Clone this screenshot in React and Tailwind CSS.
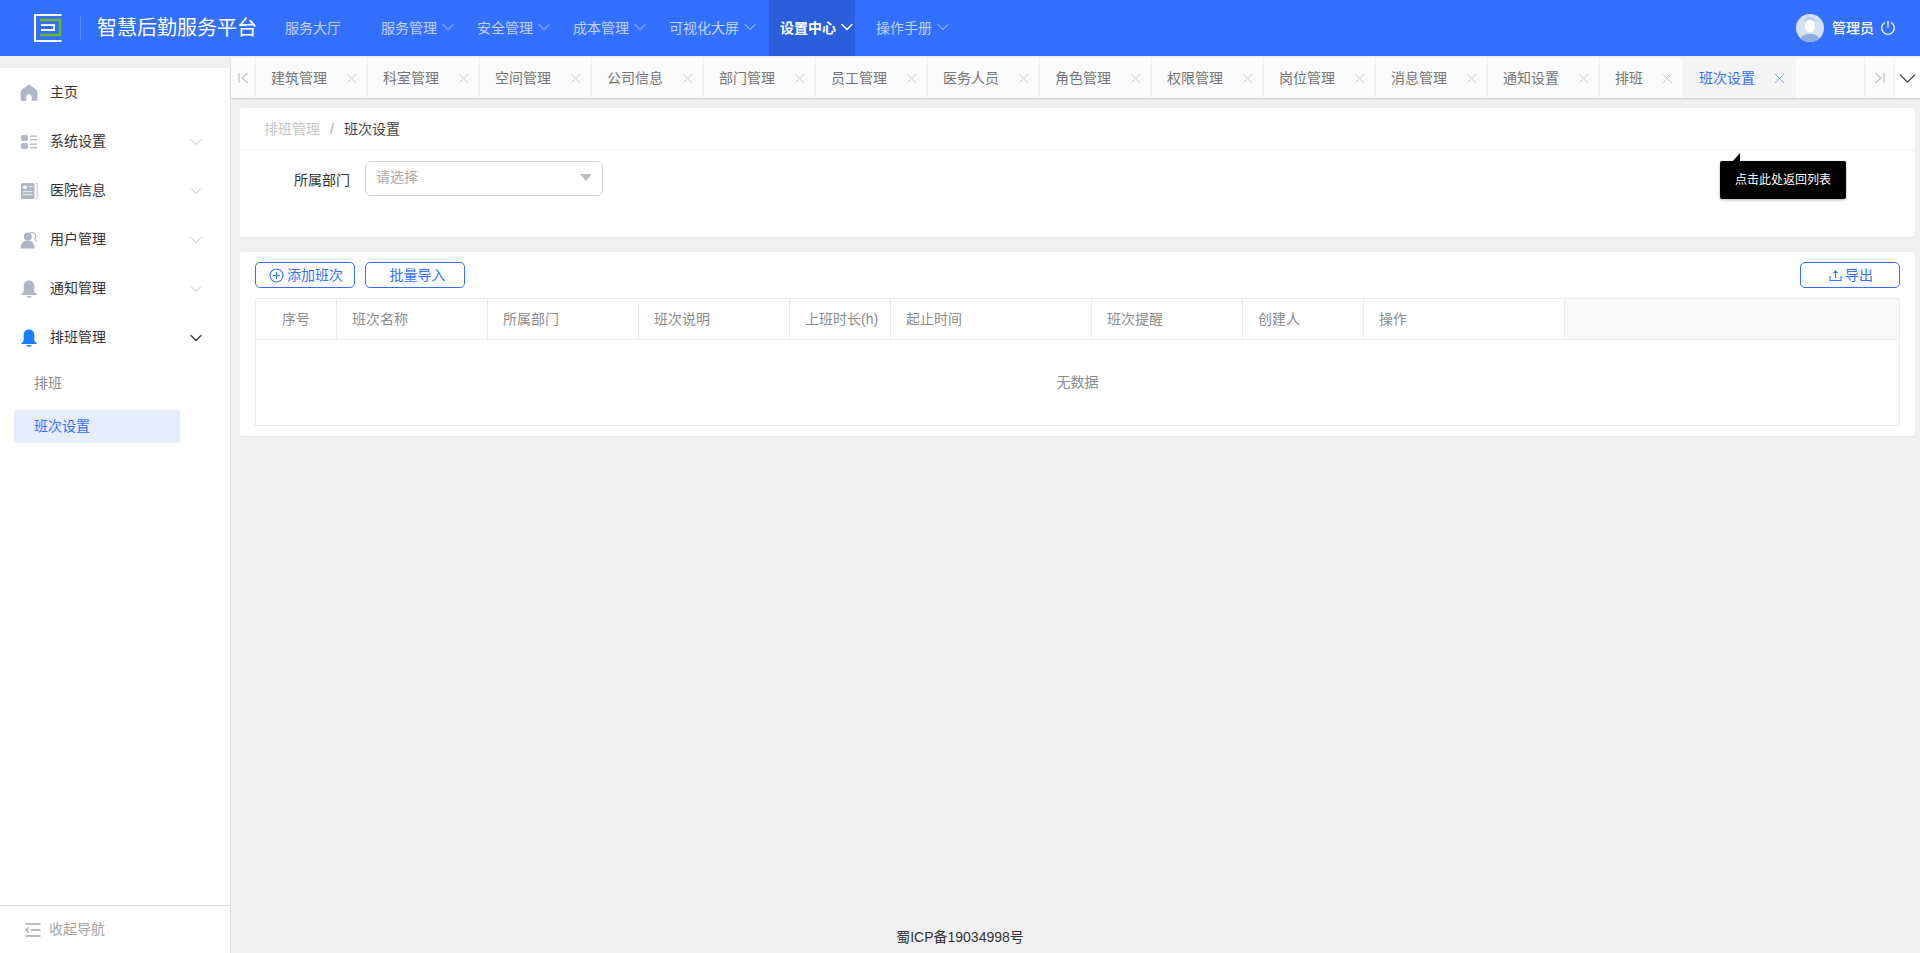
import { ChevronDown, X } from "lucide-react";

const navItems = [
  { label: "服务管理", ml: "ml-[29px]" },
  { label: "安全管理", ml: "ml-[7px]" },
  { label: "成本管理", ml: "ml-[7px]" },
  { label: "可视化大屏", ml: "ml-[7px]" },
  { label: "设置中心", ml: "ml-[8px]", active: true },
  { label: "操作手册", ml: "ml-[10px]" },
];

const tabs = ["建筑管理", "科室管理", "空间管理", "公司信息", "部门管理", "员工管理", "医务人员", "角色管理", "权限管理", "岗位管理", "消息管理", "通知设置", "排班", "班次设置"];

const columns = [
  { label: "序号", w: "w-[81px]", center: true },
  { label: "班次名称", w: "w-[151px]" },
  { label: "所属部门", w: "w-[151px]" },
  { label: "班次说明", w: "w-[151px]" },
  { label: "上班时长(h)", w: "w-[101px]" },
  { label: "起止时间", w: "w-[201px]" },
  { label: "班次提醒", w: "w-[151px]" },
  { label: "创建人", w: "w-[121px]" },
  { label: "操作", w: "w-[201px]" },
];

function Logo() {
  return (
    <svg width="28" height="28" viewBox="0 0 28 28" fill="none">
      <path d="M27.5 1H1v26h26.5" stroke="#fff" strokeWidth="2" />
      <path d="M6 6h20v15H6" stroke="#6bb52a" strokeWidth="2.4" />
      <path d="M7 11h13v5H7" stroke="#fff" strokeWidth="1.8" />
    </svg>
  );
}

function HomeIcon() {
  return (
    <svg width="18" height="18" viewBox="0 0 18 18" fill="#b1b6c6">
      <path d="M9 .6 1.800 5.800C1 6.400.6 7.100.6 8v7.500c0 .9.7 1.500 1.500 1.500h4.200v-4c0-1.700 1.100-2.800 2.700-2.800s2.700 1.100 2.700 2.800v4h4.200c.8 0 1.500-.6 1.500-1.500V8c0-.9-.4-1.600-1.200-2.200z" />
    </svg>
  );
}

function GridIcon() {
  return (
    <svg width="18" height="18" viewBox="0 0 18 18" fill="#b1b6c6">
      <rect x="1" y="2" width="7" height="6" rx="2" />
      <rect x="1" y="10" width="7" height="6" rx="2" />
      <rect x="10" y="2.500" width="7" height="1.300" />
      <rect x="10" y="6" width="7" height="1.300" />
      <rect x="10" y="10.500" width="7" height="1.300" />
      <rect x="10" y="14" width="7" height="1.300" />
    </svg>
  );
}

function DocIcon() {
  return (
    <svg width="18" height="18" viewBox="0 0 18 18" fill="none">
      <path d="M15 1.500h1.500c.5 0 .8.300.8.800V15c0 1-.7 1.700-1.600 1.700" stroke="#c9ccd7" strokeWidth="1.200" />
      <rect x="1" y="1" width="13.500" height="16" rx="1.500" fill="#b1b6c6" />
      <rect x="3" y="3.500" width="4" height="3.500" rx="1.700" fill="#fff" />
      <rect x="8.500" y="4" width="4" height="1.100" fill="#e5e7ee" />
      <rect x="3" y="9" width="9.500" height="1.200" fill="#e5e7ee" />
      <rect x="3" y="12" width="9.500" height="1.200" fill="#e5e7ee" />
    </svg>
  );
}

function UsersIcon() {
  return (
    <svg width="18" height="18" viewBox="0 0 18 18" fill="none">
      <path d="M10 1.500c2.800-1 5.800.8 5.800 3.500 0 1.100-.5 2-1.300 2.600 1 .7 1.900 2 2.300 3.400" stroke="#b1b6c6" strokeWidth="1.100" />
      <circle cx="7.800" cy="5.500" r="4" fill="#b1b6c6" />
      <path d="M.5 17.500c0-4.500 2.500-8 7.300-8s6.700 3.500 6.700 8z" fill="#b1b6c6" />
    </svg>
  );
}

function BellIcon({ color }) {
  return (
    <svg width="18" height="18" viewBox="0 0 18 18" fill={color}>
      <path d="M9 .5c-3.300 0-5.300 2.400-5.300 5.500v5c0 1-.8 2-2.200 2.800V15h15v-1.200c-1.400-.8-2.200-1.800-2.200-2.800V6c0-3.100-2-5.500-5.300-5.500z" />
      <rect x="6.500" y="16" width="5" height="1.500" rx=".7" />
    </svg>
  );
}

function CollapseIcon() {
  return (
    <svg width="16" height="14" viewBox="0 0 16 14" fill="none" stroke="#a5a5a5" strokeWidth="1.400">
      <path d="M.5 1h15M6 7h9.500M.5 13h15" />
      <path d="M3.500 4.500 1 7l2.500 2.500" />
    </svg>
  );
}

function Avatar() {
  return (
    <svg width="28" height="28" viewBox="0 0 28 28">
      <defs>
        <clipPath id="avatarClip">
          <circle cx="14" cy="14" r="14" />
        </clipPath>
      </defs>
      <g clipPath="url(#avatarClip)">
        <rect width="28" height="28" fill="#d3e0f8" />
        <path d="M4 29c0-6 3-9 10-9s10 3 10 9z" fill="#8facdf" />
        <ellipse cx="14" cy="12" rx="5" ry="6.500" fill="#fff" />
        <path d="M8 7c1-3 3-4 6-4s5 1 6 4c-2-1-10-1-12 0z" fill="#b7ccee" />
      </g>
    </svg>
  );
}

function SideItem({ icon, label, open, noArrow }) {
  return (
    <div className="h-[49px] flex items-center pl-[20px] pr-[24px]">
      <div className="w-[18px] h-[18px] flex items-center justify-center shrink-0">{icon}</div>
      <span className="ml-[12px] text-[14px] text-[#333]">{label}</span>
      {!noArrow && <ChevronDown size={20} strokeWidth={open ? 1.500 : 1} className={`ml-auto ${open ? "text-[#333]" : "text-[#b5b5b5]"}`} />}
    </div>
  );
}

function Sidebar() {
  return (
    <aside className="w-[231px] shrink-0 pt-[12px] flex flex-col">
      <div className="flex-1 bg-white border-r border-[#e4e4e4] flex flex-col">
        <SideItem icon={<HomeIcon />} label="主页" noArrow />
        <SideItem icon={<GridIcon />} label="系统设置" />
        <SideItem icon={<DocIcon />} label="医院信息" />
        <SideItem icon={<UsersIcon />} label="用户管理" />
        <SideItem icon={<BellIcon color="#b1b6c6" />} label="通知管理" />
        <SideItem icon={<BellIcon color="#1a7cff" />} label="排班管理" open />
        <div className="h-[36px] mt-[3px] flex items-center pl-[34px] text-[14px] text-[#8c8c8c]">排班</div>
        <div className="mt-[9px] ml-[14px] w-[166px] h-[33px] rounded-[3px] bg-[#e6edfd] flex items-center pl-[20px] text-[14px] text-[#3370ff]">班次设置</div>
        <div className="mt-auto h-[48px] border-t border-[#dedede] flex items-center pl-[25px] text-[14px] text-[#a5a5a5]">
          <CollapseIcon />
          <span className="ml-[8px]">收起导航</span>
        </div>
      </div>
    </aside>
  );
}

function Header() {
  return (
    <header className="h-[56px] shrink-0 bg-[#3370ff] flex items-center">
      <div className="ml-[34px]"><Logo /></div>
      <div className="ml-[18px] w-px h-[24px] bg-white/20" />
      <div className="ml-[16px] text-[20px] text-white">智慧后勤服务平台</div>
      <div className="ml-[28px] text-[14px] text-white/70">服务大厅</div>
      {navItems.map((n) => (
        <div
          key={n.label}
          className={`${n.ml} h-full flex items-center pl-[11px] text-[14px] ${n.active ? "bg-[#2a5edb] text-white font-semibold" : "text-white/70"}`}
        >
          {n.label}
          <ChevronDown size={20} strokeWidth={n.active ? 1.700 : 1.200} className={`-mt-[2px] ml-[1px] ${n.active ? "-mr-[2px]" : "mr-[1px]"}`} />
        </div>
      ))}
      <div className="ml-auto mr-[24px] flex items-center">
        <Avatar />
        <span className="ml-[8px] text-[14px] text-white font-medium">管理员</span>
        <svg className="ml-[6px]" width="16" height="16" viewBox="0 0 16 16" fill="none" stroke="#fff" strokeWidth="1.200">
          <path d="M4.800 2.600a6.300 6.300 0 1 0 6.400 0" />
          <path d="M8 .8v7" />
        </svg>
      </div>
    </header>
  );
}

function TabBar() {
  return (
    <div className="mt-[2px] h-[40px] shrink-0 flex bg-[#fbfbfb] shadow-[0_1px_2px_rgba(0,0,0,0.18)] text-[14px]">
      <div className="w-[25px] shrink-0 border-r border-[#f0f0f0] flex items-center justify-center">
        <svg width="11" height="12" viewBox="0 0 11 12" fill="none" stroke="#c4c4c4" strokeWidth="1.200">
          <path d="M1 1v10M9.500 1 4 6l5.500 5" />
        </svg>
      </div>
      {tabs.map((t, i) => {
        const active = i === tabs.length - 1;
        return (
          <div
            key={t}
            className={`shrink-0 pl-[15px] flex items-center border-r ${t === "排班" ? "w-[84px]" : "w-[112px]"} ${active ? "bg-[#f5f5f5] border-[#f5f5f5] text-[#3370ff]" : "border-[#f0f0f0] text-[#757575]"}`}
          >
            {t}
            <X size={17} strokeWidth={1.200} className={`ml-[16px] shrink-0 ${active ? "text-[#6f9bff]" : "text-[#c4c4c4]"}`} />
          </div>
        );
      })}
      <div className="flex-1" />
      <div className="w-[30px] shrink-0 border-l border-[#f0f0f0] flex items-center justify-center">
        <svg width="11" height="12" viewBox="0 0 11 12" fill="none" stroke="#c4c4c4" strokeWidth="1.200">
          <path d="M10 1v10M1.500 1 7 6l-5.500 5" />
        </svg>
      </div>
      <div className="w-[26px] shrink-0 bg-white border-l border-[#f0f0f0] flex items-center justify-center">
        <ChevronDown size={29} strokeWidth={1} className="text-[#333] shrink-0" />
      </div>
    </div>
  );
}

function OutlineButton({ children, className = "" }) {
  return (
    <button className={`w-[100px] h-[26px] rounded-[5px] border border-[#3370ff] text-[14px] text-[#3370ff] flex items-center justify-center bg-white ${className}`}>
      {children}
    </button>
  );
}

function FilterCard() {
  return (
    <section className="mt-[10px] h-[129px] shrink-0 bg-white rounded-[2px] shadow-[0_1px_2px_rgba(0,0,0,0.06)]">
      <div className="h-[43px] border-b border-[#eeeeee] flex items-center pl-[24px] text-[14px]">
        <span className="text-[#c4c4c4]">排班管理</span>
        <span className="mx-[10px] text-[#aaa]">/</span>
        <span className="text-[#444]">班次设置</span>
      </div>
      <div className="relative flex items-start pl-[54px] pt-[10px] text-[14px]">
        <span className="mt-[9px] text-[#333]">所属部门</span>
        <div className="ml-[15px] w-[238px] h-[35px] rounded-[6px] border border-[#d2d2d2] flex items-center pl-[10px] pr-[10px] text-[#aaaaaa]">
          <span className="-mt-[3px]">请选择</span>
          <span className="ml-auto -mt-[3px] w-0 h-0 border-l-[6px] border-r-[6px] border-t-[7px] border-l-transparent border-r-transparent border-t-[#c0c0c0]" />
        </div>
        <div className="absolute left-[1480px] top-[10px] w-[126px] h-[38px] bg-black rounded-[2px] shadow-[0_1px_3px_rgba(0,0,0,0.3)] flex items-center justify-center text-[12px] text-white">
          点击此处返回列表
          <span className="absolute left-[13px] -top-[8px] w-0 h-0 border-l-[7px] border-b-[8px] border-l-transparent border-b-black" />
        </div>
      </div>
    </section>
  );
}

function TableCard() {
  return (
    <section className="mt-[15px] shrink-0 bg-white rounded-[2px] px-[15px] pt-[10px] pb-[10px] shadow-[0_1px_2px_rgba(0,0,0,0.06)]">
      <div className="flex gap-[10px]">
        <OutlineButton className="pl-[2px]">
          <svg width="15" height="15" viewBox="0 0 15 15" fill="none" stroke="#3370ff" strokeWidth="1.100" className="mr-[3px]">
            <circle cx="7.500" cy="7.500" r="6.500" />
            <path d="M7.500 4v7M4 7.500h7" />
          </svg>
          添加班次
        </OutlineButton>
        <OutlineButton className="pl-[5px]">批量导入</OutlineButton>
        <div className="ml-auto">
          <OutlineButton className="pl-[2px]">
            <svg width="13" height="13" viewBox="0 0 13 13" fill="none" stroke="#3370ff" strokeWidth="1.100" className="mr-[3px]">
              <path d="M1 7v4.500h11V7" />
              <path d="M6.500 9V2" />
              <path d="M6.500 1 4 4h5z" fill="#3370ff" stroke="none" />
            </svg>
            导出
          </OutlineButton>
        </div>
      </div>
      <div className="mt-[10px] border border-[#ececec] text-[14px]">
        <div className="h-[41px] flex border-b border-[#ececec] text-[#8c8c8c]">
          {columns.map((c) => (
            <div key={c.label} className={`${c.w} shrink-0 border-r border-[#ececec] flex items-center whitespace-nowrap ${c.center ? "justify-center" : "pl-[15px]"}`}>
              {c.label}
            </div>
          ))}
          <div className="flex-1 bg-[#f9f9f9]" />
        </div>
        <div className="h-[85px] flex items-center justify-center text-[#8c8c8c]">无数据</div>
      </div>
    </section>
  );
}

export default function App() {
  return (
    <div className="h-[953px] w-full overflow-hidden flex flex-col bg-[#f1f1f1] font-['Liberation_Sans','Noto_Sans_CJK_SC',sans-serif]">
      <Header />
      <div className="flex-1 flex min-h-0">
        <Sidebar />
        <main className="flex-1 min-w-0 flex flex-col">
          <TabBar />
          <div className="flex-1 pl-[9px] pr-[5px] flex flex-col">
            <FilterCard />
            <TableCard />
            <footer className="mt-auto h-[32px] pr-[235px] flex items-center justify-center text-[14px] text-[#333]">蜀ICP备19034998号</footer>
          </div>
        </main>
      </div>
    </div>
  );
}
